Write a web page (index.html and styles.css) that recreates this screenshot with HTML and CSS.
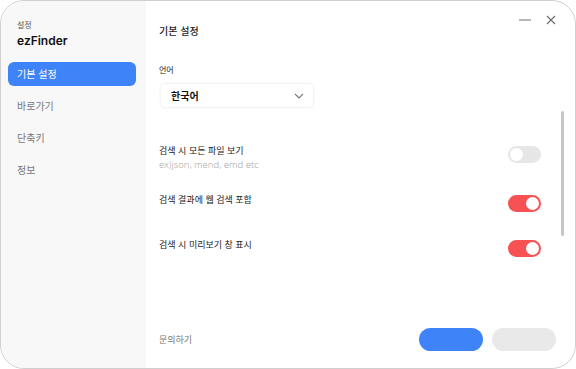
FILE: index.html
```html
<!DOCTYPE html>
<html lang="ko">
<head>
<meta charset="utf-8">
<link rel="stylesheet" href="styles.css">
</head>
<body>
<div class="window">
  <aside class="sidebar">
    <div class="app-caption">설정</div>
    <div class="app-name">ezFinder</div>
    <nav class="menu">
      <div class="menu-item active">기본 설정</div>
      <div class="menu-item">바로가기</div>
      <div class="menu-item">단축키</div>
      <div class="menu-item">정보</div>
    </nav>
  </aside>
  <main class="main">
    <div class="win-controls">
      <svg class="ctl" width="14" height="14" viewBox="0 0 14 14"><line x1="1" y1="7" x2="13" y2="7" stroke="#707070" stroke-width="1.2"/></svg>
      <svg class="ctl" width="14" height="14" viewBox="0 0 14 14"><path d="M3 3 L11 11 M11 3 L3 11" stroke="#707070" stroke-width="1.2" fill="none"/></svg>
    </div>
    <h1 class="title">기본 설정</h1>
    <div class="content">
      <div class="field-label">언어</div>
      <div class="select">
        <span>한국어</span>
        <svg width="10" height="6" viewBox="0 0 10 6"><path d="M1 1 L5 5 L9 1" stroke="#7a7a7a" stroke-width="1.1" fill="none"/></svg>
      </div>
      <div class="options">
        <div class="option">
          <div class="opt-text">
            <div class="opt-title">검색 시 모든 파일 보기</div>
            <div class="opt-sub">ex)json, mend, emd etc</div>
          </div>
          <div class="toggle"><span class="knob"></span></div>
        </div>
        <div class="option">
          <div class="opt-text">
            <div class="opt-title">검색 결과에 웹 검색 포함</div>
          </div>
          <div class="toggle on"><span class="knob"></span></div>
        </div>
        <div class="option">
          <div class="opt-text">
            <div class="opt-title">검색 시 미리보기 창 표시</div>
          </div>
          <div class="toggle on"><span class="knob"></span></div>
        </div>
      </div>
    </div>
    <div class="scrollbar"></div>
    <footer class="footer">
      <span class="contact">문의하기</span>
      <div class="buttons">
        <div class="btn primary"></div>
        <div class="btn secondary"></div>
      </div>
    </footer>
  </main>
</div>
</body>
</html>
```

FILE: styles.css
```css
* { box-sizing: border-box; margin: 0; padding: 0; }
html, body { width: 576px; height: 369px; background: #ffffff; }
body {
  font-family: "Noto Sans CJK KR", "Noto Sans", sans-serif;
  color: #222;
}
.window {
  width: 576px;
  height: 369px;
  border: 1px solid #cfcfcf;
  border-radius: 24px;
  overflow: hidden;
  display: flex;
  background: #fff;
}
.sidebar {
  width: 145px;
  flex-shrink: 0;
  background: #f8f8f8;
  padding: 19px 10px 0 7px;
  display: flex;
  flex-direction: column;
}
.app-caption {
  font-size: 8px;
  color: #555;
  line-height: 10px;
  padding-left: 9px;
}
.app-name {
  font-family: "Inter", "Noto Sans", sans-serif;
  font-weight: 600;
  font-size: 12px;
  line-height: 16px;
  margin-top: 3px;
  padding-left: 9px;
  color: #111;
}
.menu {
  margin-top: 13px;
  display: flex;
  flex-direction: column;
  gap: 8px;
}
.menu-item {
  height: 24px;
  line-height: 24px;
  padding-left: 9px;
  font-size: 10px;
  color: #777;
  border-radius: 6px;
}
.menu-item.active {
  background: #3f83f8;
  color: #fff;
}
.main {
  flex: 1;
  position: relative;
  display: flex;
  flex-direction: column;
  padding: 0 0 0 13px;
}
.win-controls {
  position: absolute;
  top: 12px;
  right: 17px;
  display: flex;
  gap: 12px;
}
.title {
  font-size: 10px;
  font-weight: 500;
  color: #222;
  margin-top: 23px;
  line-height: 14px;
}
.content {
  padding-right: 34px;
}
.field-label {
  font-size: 8px;
  color: #222;
  margin-top: 27px;
  line-height: 10px;
}
.select {
  margin-top: 9px;
  margin-left: 2px;
  width: 152px;
  height: 23px;
  background: #fff;
  border-radius: 4px;
  box-shadow: 0 0 3px rgba(0,0,0,0.12);
  display: flex;
  align-items: center;
  justify-content: space-between;
  padding: 0 9px 0 10px;
  font-size: 10px;
  font-weight: 600;
  color: #111;
}
.options {
  margin-top: 37px;
  display: flex;
  flex-direction: column;
}
.option {
  display: flex;
  align-items: flex-start;
  justify-content: space-between;
}
.option + .option { margin-top: 21px; }
.option:nth-child(3) { margin-top: 26px; }
.opt-title {
  font-size: 9px;
  color: #222;
  line-height: 14px;
}
.opt-sub {
  font-family: "Noto Sans", sans-serif;
  font-size: 9.5px;
  color: #a8a8a8;
  font-weight: 300;
  line-height: 14px;
}
.toggle {
  width: 33px;
  height: 17px;
  border-radius: 9px;
  background: #e6e6e6;
  position: relative;
  margin-top: 2px;
}
.toggle .knob {
  position: absolute;
  top: 2px;
  left: 2px;
  width: 13px;
  height: 13px;
  border-radius: 50%;
  background: #fff;
}
.toggle.on { background: #f65254; }
.toggle.on .knob { left: 18px; }
.scrollbar {
  position: absolute;
  right: 11px;
  top: 110px;
  width: 3px;
  height: 125px;
  background: #c6c6c6;
  border-radius: 2px;
}
.footer {
  margin-top: auto;
  height: 56px;
  display: flex;
  align-items: flex-start;
  justify-content: space-between;
  padding-right: 19px;
  padding-top: 16px;
}
.contact {
  font-size: 9px;
  color: #777;
  line-height: 14px;
  margin-top: 5px;
}
.buttons {
  display: flex;
  gap: 9px;
}
.btn {
  width: 64px;
  height: 23px;
  border-radius: 12px;
}
.btn.primary { background: #3f83f8; }
.btn.secondary { background: #e9e9e9; }
```
